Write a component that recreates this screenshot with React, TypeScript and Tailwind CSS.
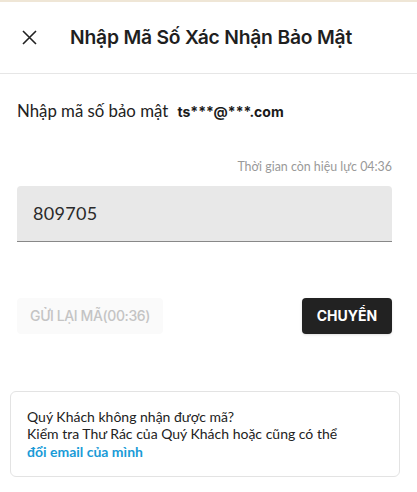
export default function App() {
  return (
    <div className="min-h-[492px] w-[417px] bg-white border-t-2 border-[#efe6d6] [font-family:Lato,'Noto_Sans',sans-serif]">
      <header className="flex h-[72px] items-center border-b border-[#e6e6e6] pl-[22px]">
        <button type="button" className="text-[#222]">
          <svg width="15" height="15" viewBox="0 0 15 15" fill="none" stroke="currentColor" strokeWidth="1.6">
            <path d="M1 1l13 13M14 1L1 14" />
          </svg>
        </button>
        <h1 className="ml-[33px] text-[19.3px] font-semibold text-[#1f1f1f] [font-family:Inter,sans-serif] tracking-[-0.2px]">
          Nhập Mã Số Xác Nhận Bảo Mật
        </h1>
      </header>

      <div className="pl-[17px] pr-[25px]">
        <p className="mt-[24px] text-[16.8px] text-[#222]">
          Nhập mã số bảo mật <span className="ml-[5px] font-bold text-[#1a1a1a] [font-family:Inter,sans-serif] text-[14px]">ts***@***.com</span>
        </p>
        <p className="mt-[35px] text-right text-[12.4px] text-[#999]">Thời gian còn hiệu lực 04:36</p>
        <div className="mt-[9px] flex h-[56px] items-center rounded-t-[4px] border-b border-[#888] bg-[#e8e8e8] px-[16px]">
          <span className="text-[18px] tracking-[0.3px] text-[#2a2a2a]">809705</span>
        </div>

        <div className="mt-[56px] flex items-center justify-between">
          <button type="button" className="h-[36px] w-[146px] rounded-[4px] bg-[#fafafa] text-[14px] font-medium text-[#c4c4c4] [font-family:Inter,sans-serif] tracking-[-0.4px]">
            GỬI LẠI MÃ(00:36)
          </button>
          <button type="button" className="h-[36px] w-[90px] rounded-[4px] bg-[#222] text-[14px] font-bold text-white [font-family:Inter,sans-serif] shadow-sm">
            CHUYỂN
          </button>
        </div>
      </div>

      <div className="ml-[10px] mr-[17px] mt-[57px] rounded-[6px] border border-[#e3e3e3] px-[16px] py-[16px] text-[14px] leading-[17.5px] text-[#222]">
        <p>Quý Khách không nhận được mã?</p>
        <p>Kiểm tra Thư Rác của Quý Khách hoặc cũng có thể</p>
        <a href="#" className="font-bold text-[#1a9bd7]">đổi email của mình</a>
      </div>
    </div>
  );
}
